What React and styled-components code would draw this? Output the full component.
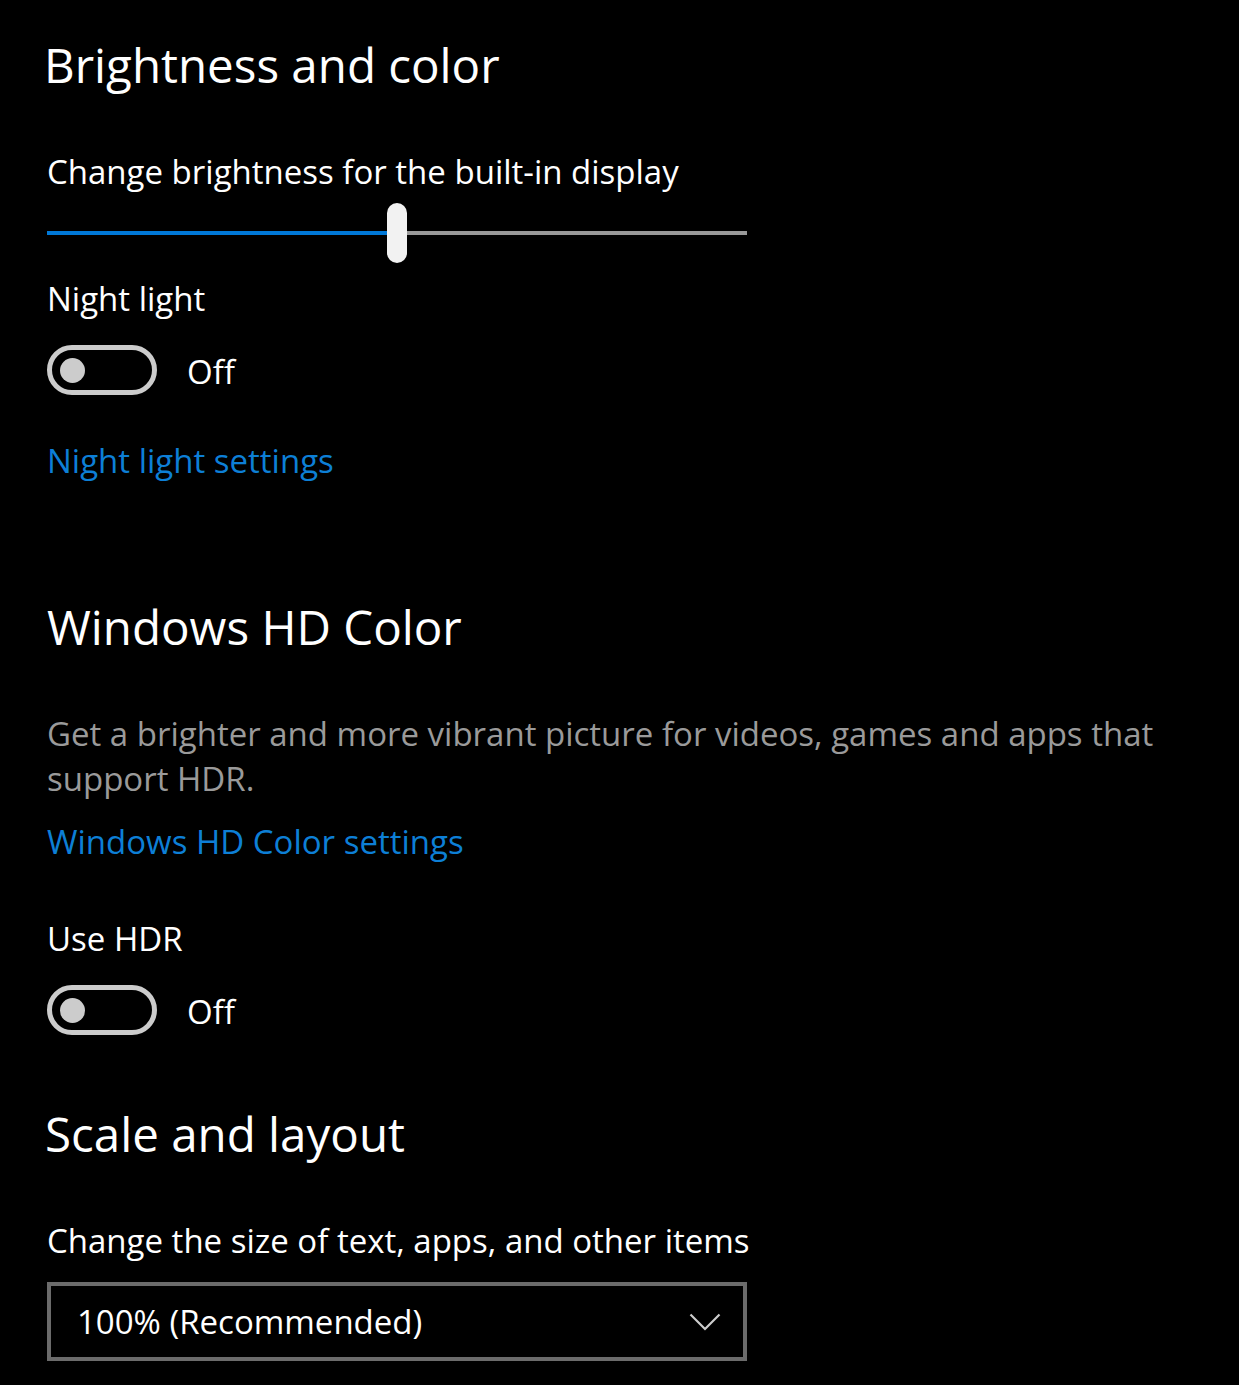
import React from "react";
import styled, { createGlobalStyle } from "styled-components";

const GlobalStyle = createGlobalStyle`
  html, body {
    margin: 0;
    padding: 0;
    background: #000;
  }
  body {
    font-family: "Open Sans", "Noto Sans", sans-serif;
    color: #fff;
  }
`;

const Page = styled.div`
  width: 1239px;
  min-height: 1385px;
  box-sizing: border-box;
  padding: 35px 0 0 47px;
  background: #000;
  display: flex;
  flex-direction: column;
  align-items: flex-start;
`;

const Heading = styled.h2`
  margin: ${(p) => p.$top || 0}px 0 0 ${(p) => p.$shift || 0}px;
  font-size: 47.5px;
  line-height: 60px;
  font-weight: 400;
  color: #fff;
  white-space: nowrap;
`;

const Label = styled.div`
  margin-top: ${(p) => p.$top || 0}px;
  font-size: 33px;
  line-height: 44px;
  color: #fff;
  white-space: nowrap;
`;

const Description = styled.p`
  margin: ${(p) => p.$top || 0}px 0 0;
  max-width: 1130px;
  font-size: 33px;
  line-height: 45px;
  color: #9a9a9a;
`;

const Link = styled.a`
  margin-top: ${(p) => p.$top || 0}px;
  font-size: 33px;
  line-height: 44px;
  color: #0d7fd6;
  text-decoration: none;
  white-space: nowrap;
`;

const SliderWrap = styled.div`
  position: relative;
  margin-top: 9px;
  width: 700px;
  height: 60px;
  display: flex;
  align-items: center;
`;

const Track = styled.div`
  width: 100%;
  height: 4px;
  background: #999;
  display: flex;
`;

const Fill = styled.div`
  height: 100%;
  background: #0078d7;
`;

const Thumb = styled.div`
  position: absolute;
  top: 0;
  width: 20px;
  height: 60px;
  border-radius: 10px;
  background: #f2f2f2;
  transform: translateX(-50%);
`;

const ToggleRow = styled.div`
  margin-top: ${(p) => p.$top || 0}px;
  display: flex;
  align-items: center;
  gap: 30px;
  height: 50px;
`;

const Switch = styled.div`
  box-sizing: border-box;
  width: 110px;
  height: 50px;
  border: 5px solid #ccc;
  border-radius: 25px;
  display: flex;
  align-items: center;
  padding-left: 8px;
`;

const Knob = styled.div`
  width: 25px;
  height: 25px;
  border-radius: 50%;
  background: #ccc;
`;

const ToggleText = styled.span`
  font-size: 33px;
  line-height: 44px;
  color: #fff;
  margin-top: 4px;
`;

const Dropdown = styled.div`
  margin-top: 19px;
  box-sizing: border-box;
  width: 700px;
  height: 79px;
  border: 4px solid #6b6b6b;
  display: flex;
  align-items: center;
  justify-content: space-between;
  padding: 0 22px 0 26px;
`;

const DropdownValue = styled.span`
  font-size: 33px;
  line-height: 44px;
  color: #fff;
`;

const Chevron = () => (
  <svg width="32" height="18" viewBox="0 0 32 18">
    <polyline points="1.5,1.5 16,16 30.5,1.5" fill="none" stroke="#ccc" strokeWidth="2.2" />
  </svg>
);

const Slider = ({ value }) => (
  <SliderWrap>
    <Track>
      <Fill style={{ width: `${value}%` }} />
    </Track>
    <Thumb style={{ left: `${value}%` }} />
  </SliderWrap>
);

const Toggle = ({ top }) => (
  <ToggleRow $top={top}>
    <Switch>
      <Knob />
    </Switch>
    <ToggleText>Off</ToggleText>
  </ToggleRow>
);

export default function App() {
  return (
    <Page>
      <GlobalStyle />
      <Heading $shift={-3}>Brightness and color</Heading>
      <Label $top={55}>Change brightness for the built-in display</Label>
      <Slider value={50} />
      <Label $top={14}>Night light</Label>
      <Toggle top={24} />
      <Link $top={44} href="#">Night light settings</Link>

      <Heading $top={114}>Windows HD Color</Heading>
      <Description $top={54}>
        Get a brighter and more vibrant picture for videos, games and apps that support HDR.
      </Description>
      <Link $top={19} href="#">Windows HD Color settings</Link>
      <Label $top={53}>Use HDR</Label>
      <Toggle top={24} />

      <Heading $top={69} $shift={-2}>Scale and layout</Heading>
      <Label $top={55}>Change the size of text, apps, and other items</Label>
      <Dropdown>
        <DropdownValue>100% (Recommended)</DropdownValue>
        <Chevron />
      </Dropdown>
    </Page>
  );
}
